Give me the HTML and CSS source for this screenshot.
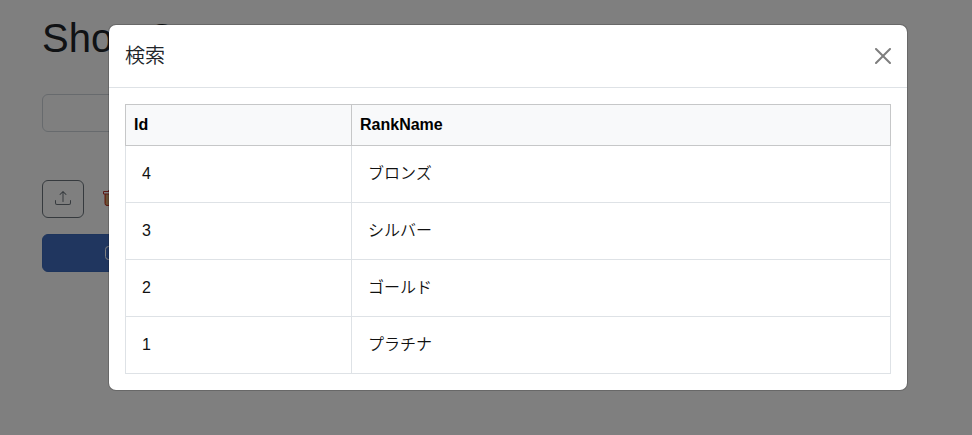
FILE: index.html
```html
<!DOCTYPE html>
<html lang="ja">
<head>
<meta charset="utf-8">
<title>検索</title>
<link rel="stylesheet" href="styles.css">
</head>
<body>
<main class="page">
  <h1 class="title">Shop C</h1>
  <div class="field"></div>
  <div class="tools">
    <button class="tool upload" aria-label="upload">
      <svg width="16" height="16" viewBox="0 0 16 16" fill="currentColor"><path d="M.5 9.900a.5.5 0 0 1 .5.5v2.500a1 1 0 0 0 1 1h12a1 1 0 0 0 1-1v-2.500a.5.5 0 0 1 1 0v2.500a2 2 0 0 1-2 2H2a2 2 0 0 1-2-2v-2.500a.5.5 0 0 1 .5-.5"/><path d="M7.646 1.146a.5.5 0 0 1 .708 0l3 3a.5.5 0 0 1-.708.708L8.500 2.707V11.500a.5.5 0 0 1-1 0V2.707L5.354 4.854a.5.5 0 1 1-.708-.708z"/></svg>
    </button>
    <button class="tool trash" aria-label="delete">
      <svg width="16" height="16" viewBox="0 0 16 16" fill="none" stroke="currentColor"><path class="can" d="M2.500 4v9.500a2 2 0 0 0 2 2h7a2 2 0 0 0 2-2V4"/><path d="M.5 1.500h14v2.500H.5zM2 4v9.500a2 2 0 0 0 2 2h7M5.500 1.500v-1h5v1"/></svg>
    </button>
  </div>
  <button class="primary" aria-label="save">
    <svg width="16" height="16" viewBox="0 0 16 16" fill="none" stroke="currentColor"><rect x=".5" y="1.500" width="15" height="13" rx="3"/></svg>
  </button>
</main>
<div class="backdrop">
  <section class="modal">
    <header class="modal-header">
      <h5 class="modal-title">検索</h5>
      <svg class="close" width="16" height="16" viewBox="0 0 16 16"><path d="M.293.293a1 1 0 0 1 1.414 0L8 6.586 14.293.293a1 1 0 1 1 1.414 1.414L9.414 8l6.293 6.293a1 1 0 0 1-1.414 1.414L8 9.414l-6.293 6.293a1 1 0 0 1-1.414-1.414L6.586 8 .293 1.707a1 1 0 0 1 0-1.414z"/></svg>
    </header>
    <div class="modal-body">
      <table class="grid">
        <thead><tr><th class="id">Id</th><th>RankName</th></tr></thead>
        <tbody>
          <tr><td>4</td><td>ブロンズ</td></tr>
          <tr><td>3</td><td>シルバー</td></tr>
          <tr><td>2</td><td>ゴールド</td></tr>
          <tr><td>1</td><td>プラチナ</td></tr>
        </tbody>
      </table>
    </div>
  </section>
</div>
</body>
</html>
```
FILE: styles.css
```css
* { box-sizing: border-box; }
body {
  margin: 0;
  height: 435px;
  overflow: hidden;
  background: #fff;
  color: #212529;
  font: 16px/24px "Liberation Sans", "Noto Sans CJK JP", sans-serif;
}
.page { padding: 14px 42px; }
.title { margin: 0 0 32px; font-size: 40px; font-weight: 400; line-height: 48px; }
.field { width: 300px; height: 38px; border: 1px solid #ced4da; border-radius: 6px; }
.tools { display: flex; gap: 8px; margin: 48px 0 16px; }
.tool {
  display: flex;
  align-items: center;
  justify-content: center;
  width: 42px;
  height: 38px;
  padding: 0 0 2px;
  border: 1px solid #6c757d;
  border-radius: 6px;
  background: none;
}
.upload { color: #6c757d; }
.trash { justify-content: flex-start; padding-left: 10px; border-color: transparent; color: #b8322c; }
.can { fill: #d0a070; stroke: #e0852a; }
.primary {
  display: flex;
  align-items: center;
  justify-content: center;
  width: 142px;
  height: 38px;
  padding: 0;
  border: 1px solid #3b68b8;
  border-radius: 6px;
  background: #406dbe;
  color: #fff;
}
.backdrop { position: absolute; inset: 0; padding: 24px 0 0 108px; background: rgba(0, 0, 0, .5); }
.modal {
  width: 800px;
  border: 1px solid rgba(0, 0, 0, .175);
  border-radius: 8px;
  background: #fff;
  background-clip: padding-box;
}
.modal-header {
  display: flex;
  align-items: center;
  justify-content: space-between;
  height: 63px;
  padding: 0 16px;
  border-bottom: 1px solid #dee2e6;
}
.modal-title { margin: 0; font-size: 20px; font-weight: 350; line-height: 30px; }
.close { opacity: .5; }
.modal-body { padding: 16px; }
.grid { width: 766px; border-collapse: collapse; table-layout: fixed; color: #000; }
.grid th {
  height: 41px;
  padding: 0 8px;
  border: 1px solid #c6c7c8;
  background: #f8f9fa;
  text-align: left;
}
.grid .id { width: 226px; }
.grid td { height: 57px; padding: 0 16px; border: 1px solid #dee2e6; color: #111; font-weight: 350; }
```
